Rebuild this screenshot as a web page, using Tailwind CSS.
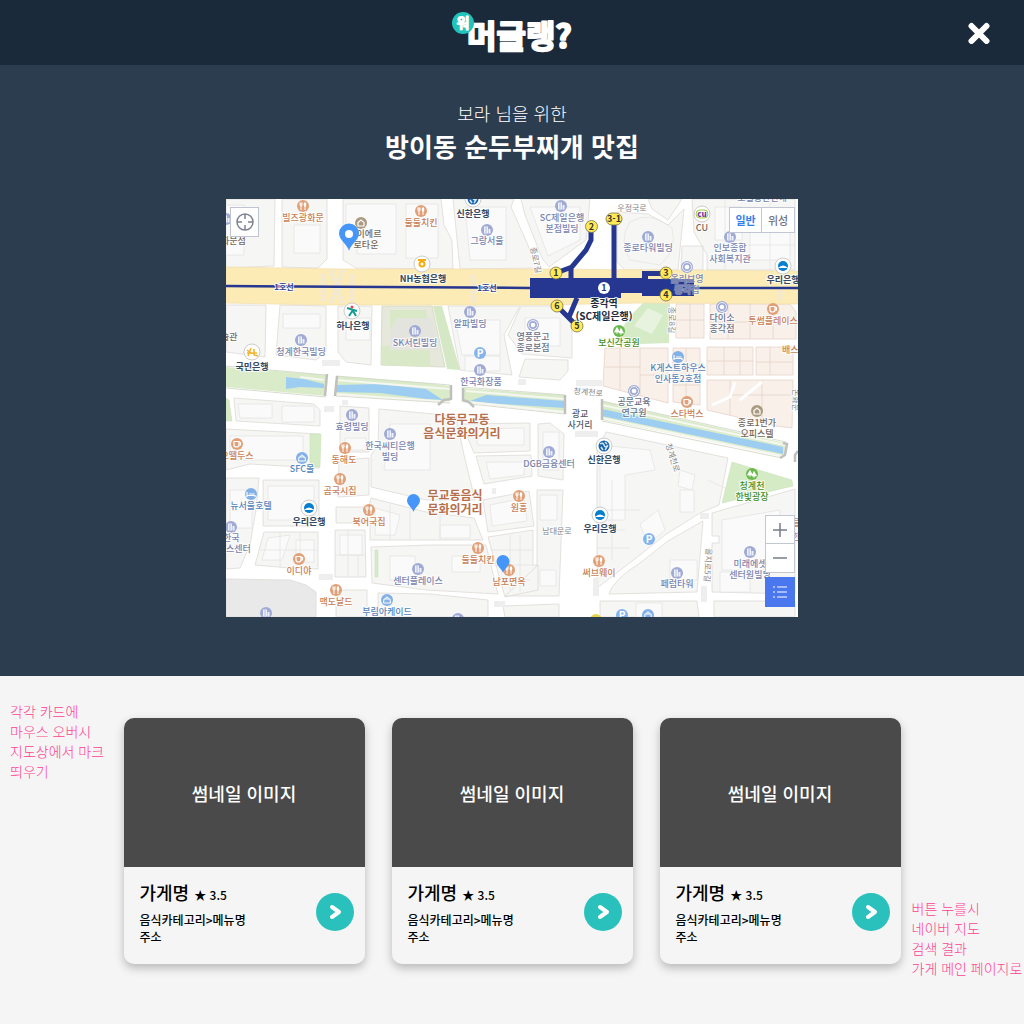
<!DOCTYPE html>
<html lang="ko">
<head>
<meta charset="utf-8">
<meta name="viewport" content="width=device-width, initial-scale=1">
<title>머글랭?</title>
<script src="https://cdn.jsdelivr.net/npm/@tailwindcss/browser@4"></script>
</head>
<body class="min-h-screen flex flex-col bg-[#f5f5f5] font-['Noto_Sans_CJK_KR',sans-serif] text-black">

<header class="h-[65px] shrink-0 bg-[#1b2a3a] grid grid-cols-[1fr_auto_1fr] items-center">
  <h1 class="col-start-2">
    <svg class="block w-[124px] h-[56px]" viewBox="450 4 124 56" role="img" aria-label="뭐 머글랭?">
      <g font-family="'Noto Sans CJK KR',sans-serif" font-weight="700" fill="#fff" stroke="#fff" stroke-linejoin="round">
        <text x="467" y="47" font-size="32" stroke-width="2">머글랭?</text>
        <circle cx="463" cy="22" r="11" fill="#1fc4bd" stroke="none"/>
        <text x="463" y="27" font-size="14" stroke-width="1" text-anchor="middle">워</text>
      </g>
    </svg>
  </h1>
  <button type="button" aria-label="닫기" class="justify-self-end mr-8 p-0.5">
    <svg class="block w-[22px] h-[22px]" viewBox="0 0 22 22" stroke="#fff" stroke-width="6" stroke-linecap="round"><path d="M3.500 4 18.500 19M18.500 4 3.500 19"/></svg>
  </button>
</header>

<main class="flex-1 flex flex-col">
<section class="bg-[#2d3d50] flex flex-col items-center pt-[35px] pb-[59px]">
  <p class="text-[18px] leading-[26px] font-light text-white">보라 님을 위한</p>
  <h2 class="text-[26px] leading-10 font-bold text-white">방이동 순두부찌개 맛집</h2>

  <div class="relative mt-[33px] w-[572px] max-w-full">
  <svg class="block w-full" viewBox="226 199 572 418" role="img" aria-label="지도">
    <defs>
      <g id="bld"><circle r="6" fill="#a0abd5"/><path d="M-3 3.5V-3.5H1V3.5ZM1.5 3.500V-1H3.500V3.500Z" fill="#eef0fa"/><path d="M-1.800-2H0M-1.800 0H0M-1.800 2H0" stroke="#a0abd5" stroke-width=".8"/></g>
      <g id="food"><circle r="6" fill="#e0a078"/><path d="M-3-3.500V-1Q-3 0-2 0T-1-1V-3.500M-2-3.500V4M2 4V0" stroke="#fff" fill="none"/><ellipse cx="2" cy="-1.500" rx="1.300" ry="2.200" fill="#fff"/></g>
      <g id="cafe"><circle r="6" fill="#e0a078"/><path d="M-3-2.500H2V1Q2 3-.500 3T-3 1ZM2-1.500H3.500V1H2" stroke="#fff" fill="none" stroke-width="1.200"/></g>
      <g id="ring"><circle r="6" fill="#a0abd5"/><circle r="4.500" fill="none" stroke="#fff" stroke-width=".8"/><circle r="2.300" fill="#fff"/></g>
      <g id="hotel"><circle r="6" fill="#83b0e6"/><path d="M-4-2V3M-4 1.500H4V3M-2 0H3.500" stroke="#fff" fill="none" stroke-width="1.200"/></g>
      <g id="shop"><circle r="6" fill="#83b0e6"/><path d="M-3-1H3L3.500 3H-3.500ZM-1.500-1Q-1.500-3 0-3T1.500-1" stroke="#fff" fill="none"/></g>
      <g id="home"><circle r="6" fill="#aa9b80"/><path d="M-3 3V-.500L0-3 3-.500V3Z" fill="none" stroke="#fff" stroke-width="1.200"/></g>
      <g id="park"><circle r="6" fill="#6cb84f"/><path d="M-2-3.500-4.500 1H.500ZM2-2.500 0 2H4.500ZM-2 0V3M2 1V4" fill="#fff" stroke="#fff" stroke-width=".8"/></g>
      <g id="p"><circle r="6" fill="#83b5ec"/><text y="3.500" font-size="10" font-weight="700" fill="#fff" text-anchor="middle">P</text></g>
      <g id="bank"><circle r="8" fill="#fff" stroke="#ccc"/></g>
      <g id="woori"><use href="#bank"/><circle r="5" fill="#087fce"/><path d="M-5 2Q0-3 5 2Z" fill="#fff"/><path d="M-4 3Q0 6 4 3Z" fill="#087fce"/></g>
      <g id="shinhan"><use href="#bank"/><circle r="5.500" fill="#1763ae"/><path d="M-4-2Q-1-4 0-1T3 0 1 4M1-4 3-2M-3 1-1 4" stroke="#cfe6ee" stroke-width="1.500" fill="none"/></g>
      <g id="pin"><path d="M0 9C-1 5-6.500 2-6.500-2.500A6.500 6.500 0 0 1 6.500-2.500C6.500 2 1 5 0 9Z" fill="#4596f8"/></g>
    </defs>

    <rect x="226" y="199" width="572" height="418" fill="#fff"/>
    <!-- city blocks -->
    <g fill="#f6f6f5" stroke="#dedbd6" stroke-width=".8">
      <path d="M226 199H275L274 266 226 268ZM282 199H327V259L318 268 282 267ZM343 199H441L444 225 452 240 453 269 356 268 343 260ZM453 199H514L511 207 530 250 540 268 460 269ZM521 199H590L586 240 549 267 542 258 525 215ZM617 212 648 214 668 225 684 209 678 270H625L617 262ZM648 199H682L668 220 652 209ZM692 199H795V270H707V255L694 232ZM682 246 703 246 703 270H681Z"/>
      <path d="M226 305H266L265 357 226 352ZM280 305 326 306V352L316 360 276 355ZM338 306H372L371 365 346 362 338 352ZM448 306H520L504 335 512 375 460 370ZM521 306H556L572 325V358L522 354 508 335ZM525 359 568 360V371L560 380 519 377Z"/>
      <path d="M234 398 314 404 320 410V426L236 421ZM226 429 320 434 319 468 250 464 226 470ZM340 406 369 408V452H340ZM379 409 456 416 464 455 475 500 426 500 371 487V455L378 445ZM339 460 369 458V495L338 497ZM462 424 530 423V451L474 453ZM476 456 531 455 532 476 484 484ZM538 424 550 423 564 434 563 480 538 476Z"/>
      <path d="M263 480H319V526H263ZM226 478H259L256 510 250 545 240 568 226 569ZM264 532H318V569L290 568 255 565ZM335 530H365L366 577H335ZM336 507H369L371 498 426 512 474 518 483 540 370 540V523H336ZM371 547 430 545H486L498 594 426 590 372 583ZM488 537 533 530V565H538V590L505 597ZM483 500 529 491 534 526 488 532ZM537 490H563L559 596H505L537 566ZM336 590H367V617H336ZM378 593 430 594 488 600V617H378ZM503 606 559 604V617H505Z"/>
      <path d="M606 432 728 458 719 505 700 513 665 535 640 555 597 588V450ZM609 594Q613 580 640 563L668 541 703 521 697 592ZM712 513 795 489V594L712 592V543H719V536H712ZM600 601H697L699 617H600ZM714 601H795V617H714Z"/>
      <path d="M226 579 290 580 306 585 316 592V617H226Z" fill="#e9e9e9"/>
    </g>
    <g fill="#f9f0ea" stroke="#e6d3c8" stroke-width=".8">
      <path d="M676 304H704V338H676ZM710 304 790 304 796 312V339H710ZM605 348H668V403L603 386ZM673 348H700V405L673 402ZM707 347H753V375H707ZM756 347H793V375H756ZM707 380H793L792 428 776 426 707 410Z"/>
      <path d="M676 320H704M690 304V338M728 304V339M750 304V339M773 310V339M710 322H796M620 348V390M640 348V396M605 367H640M640 375H668M673 365H700M673 385H700M686 348V404M724 347V375M740 347V375M707 361H753M770 347V375M756 362H793M730 380V415M762 380V424M730 395H792" fill="none"/>
      <path d="M735 382 730 397 712 405M762 382 740 400" stroke="#fff" stroke-width="3" fill="none"/>
    </g>
    <!-- building outlines -->
    <g fill="#fafafa" stroke="#e6e5e3" stroke-width=".8">
      <path d="M294 225H320V253H294ZM226 205H244V255H226ZM346 204H396V254H357V230H346ZM406 204H438V258H406ZM465 207H506V260H470ZM530 207H580V240L548 256ZM283 314H320V328H283ZM346 318H370V340H346ZM455 320H500V355H462ZM465 356H500V371H465ZM525 318H560V346H525ZM238 404H272V418H240ZM282 406H314V422H282ZM230 436H303V460H230ZM345 438H366V450H345ZM390 424H430V470H384ZM474 429 524 428V445H478ZM486 462H524V475L490 479ZM543 432H559V470H543ZM268 486H314V520H268ZM230 490H252V528H230ZM268 538 290 535 282 560H262ZM296 540H314V562H296ZM340 535H362V555H340ZM390 556H415V580H390ZM452 556H480V572H452ZM540 495H557V520H540ZM540 570H556V586H540ZM490 505 524 498 527 521 492 526ZM600 445 650 450 655 470 625 475V520H600ZM680 490H694V512H680ZM640 524 658 510 665 530 648 545ZM670 560H697V580H670ZM722 520 780 510V570H722ZM720 572H750V592H720ZM636 603H662V617H636ZM715 207H742V240H715ZM750 210H790V260H750ZM680 470 695 475 692 490 678 486ZM375 508 400 515 395 535H375ZM440 525H470V538H440Z"/>
      <path d="M630 222Q650 210 672 228 678 250 660 265L630 260Q618 240 630 222Z" fill="none"/>
      <path d="M260 550H318M280 532V568M300 532V568M335 555H366M348 530V577M358 555V577M490 550H532M494 565H533M510 535V590M520 535V592M498 580H530M597 510H640M597 530H625M612 480V560M597 548H630M390 505V540M410 510V540M440 500V540M708 480 750 500M745 245H795M770 199V270M725 199V270" fill="none"/>
    </g>
    <!-- green areas -->
    <path d="M382 306H432L445 367 381 365Z" fill="#e5e8da" stroke="#d8dcc9"/>
    <path d="M382 346H430V367L381 365ZM390 310H426L428 322 390 340Z" fill="#d9e9c8"/>
    <path d="M397 318H433L438 350H390V330Z" fill="#e4e4df"/>
    <path d="M433 306H442L460 370 447 369Z" fill="#d5e8c5"/>
    <path d="M643 303H670L669 343 612 345 630 316Z" fill="#d5ebc6"/>
    <path d="M648 308 663 315 652 334 634 326Z" fill="#e7f3de"/>
    <path d="M310 434H321L320 467H310ZM226 398 229 400 232 421H226ZM375 550H378V577H375ZM732 462 792 480 793 486 722 503Z" fill="#d5ebc6" stroke="#c9dfba" stroke-width=".5"/>
    <!-- stream -->
    <path d="M226 367 326 375V396L226 387ZM336 376 426 383 450 386V402L426 401 336 395ZM462 388 565 395V413L462 402ZM602 401 785 443V456L602 420Z" fill="#daebca"/>
    <path d="M286 377 304 379 324 384V388L300 387 286 389ZM336 385 380 384 426 389 443 400 426 399 380 393 336 392ZM470 401 486 395 565 401V408L500 404ZM602 409 783 447V454L602 416Z" fill="#9dcef1"/>
    <path d="M300 377 324 380M336 380 450 389M336 394 450 402M466 391 565 399M468 402 565 412M602 405 785 445M602 418 782 456" stroke="#f7f7f1" stroke-width="2" fill="none"/>
    <path d="M336 376 450 385M336 396 450 403M462 387 565 395M470 404 565 414M602 401 786 442M602 421 782 458M226 366 326 375M226 388 326 397" stroke="#cfd2c3" stroke-width=".8" fill="none"/>
    <path d="M327 374 325 396M337 376 335 396M451 385V399L444 400 438 405M463 388V400L469 402 474 407M565 395V414M602 399V420M783 443 787 444 785 455 780 458M798 451 795 455V462" stroke="#bfbfbd" stroke-width="2.500" fill="none"/>
    <!-- main road and subway -->
    <path d="M226 267 340 269 545 269 798 271V304L640 303 545 305 320 305 226 303Z" fill="#fcebb5" stroke="#f0deb0" stroke-width=".7"/>
    <path d="M323 274V302M331 270 343 304M343 270 331 304M352 274V302M473 275V303M780 290V300" stroke="#eee9e2" stroke-width="5" stroke-dasharray="3 1" opacity=".7"/>
    <path d="M322 363H340M324 409H334M345 400V405M576 383H602M575 434H598M319 577H333M596 578V596M494 604H505M700 516H709M704 586V602M492 491H496M518 382H526" stroke="#eee" stroke-width="6"/>
    <path d="M226 286 530 288M694 288H798" stroke="#253790" stroke-width="2.500"/>
    <path d="M530 278H642V271H668V276H648V279H694V296H642V293H621V298H530Z" fill="#253790"/>
    <path d="M591 228V240L586 250 571 268V280M556 273 572 267M614 220V280M577 298 569 317M558 307 578 327" fill="none" stroke="#253790" stroke-width="5"/>
    <g fill="#ffe957" stroke="#777344" stroke-width=".8"><circle cx="591.500" cy="226.500" r="6"/><circle cx="556" cy="273" r="6"/><circle cx="557" cy="306" r="6"/><circle cx="577" cy="326" r="6"/><circle cx="666" cy="273" r="6"/><circle cx="666" cy="295" r="6"/><rect x="606" y="213" width="16" height="12" rx="6"/></g>
    <circle cx="604" cy="288" r="6" fill="#fff"/>

    <!-- place icons -->
    <g font-family="'Noto Sans CJK KR',sans-serif">
    <use href="#food" x="303" y="206"/><use href="#food" x="421" y="211"/><use href="#food" x="345" y="448"/><use href="#food" x="340" y="479"/><use href="#food" x="369" y="510"/><use href="#food" x="336" y="590"/><use href="#food" x="519" y="496"/><use href="#food" x="478" y="548"/><use href="#food" x="509" y="570"/><use href="#food" x="599" y="561"/>
    <use href="#cafe" x="237" y="444"/><use href="#cafe" x="299" y="559"/><use href="#cafe" x="773" y="309"/><use href="#cafe" x="687" y="402"/>
    <use href="#bld" x="561" y="206"/><use href="#bld" x="487" y="230"/><use href="#bld" x="648" y="237"/><use href="#bld" x="730" y="237"/><use href="#bld" x="301" y="340"/><use href="#bld" x="415" y="331"/><use href="#bld" x="470" y="312"/><use href="#bld" x="480" y="370"/><use href="#bld" x="352" y="415"/><use href="#bld" x="390" y="434"/><use href="#bld" x="549" y="452"/><use href="#bld" x="231" y="527"/><use href="#bld" x="418" y="569"/><use href="#bld" x="266" y="613"/><use href="#bld" x="458" y="619"/><use href="#bld" x="677" y="573"/><use href="#bld" x="750" y="552"/><use href="#bld" x="226" y="219"/>
    <use href="#ring" x="687" y="267"/><use href="#ring" x="722" y="307"/><use href="#ring" x="533" y="325"/><use href="#ring" x="634" y="391"/>
    <use href="#hotel" x="678" y="357"/><use href="#hotel" x="251" y="494"/><use href="#shop" x="302" y="458"/><use href="#shop" x="387" y="600"/><use href="#shop" x="648" y="615"/>
    <use href="#home" x="361" y="223"/><use href="#home" x="757" y="411"/><use href="#park" x="619" y="331"/><use href="#park" x="752" y="474"/>
    <use href="#p" x="480" y="353"/><use href="#p" x="649" y="539"/><use href="#p" x="622" y="615"/>
    <use href="#woori" x="783" y="266"/><use href="#woori" x="309" y="508"/><use href="#woori" x="600" y="515"/><use href="#shinhan" x="473" y="199"/><use href="#shinhan" x="604" y="446"/>
    <use href="#bank" x="422" y="264"/><circle cx="422" cy="264" r="2.500" fill="none" stroke="#f5ad12" stroke-width="2"/><path d="M418 260H426" stroke="#f5ad12" stroke-width="2"/>
    <use href="#bank" x="352" y="311"/><path d="M347 308 357 311M353 310 349 316M353 311 356 316" stroke="#149c95" stroke-width="2"/><circle cx="352" cy="307" r="1.500" fill="#e6484b"/>
    <use href="#bank" x="252" y="352"/><path d="M247 350 252 354M251 348 248 356M247 353H257M254 349V355L258 356" stroke="#f5b52a" stroke-width="1.500" fill="none"/>
    <use href="#bank" x="702" y="214"/><rect x="696" y="210" width="12" height="8" rx="4" fill="#fff" stroke="#9ccb3b"/><text x="702" y="217" font-size="8" font-weight="900" fill="#75399a" text-anchor="middle">cu</text>
    <circle cx="596" cy="620" r="6" fill="#e6d54b"/>
    </g>

    <!-- labels -->
    <g font-family="'Noto Sans CJK KR',sans-serif" font-size="9" font-weight="500" text-anchor="middle" stroke="#fff" stroke-width="2" stroke-opacity=".8" stroke-linejoin="round" paint-order="stroke">
      <g fill="#c87f56">
        <text x="303" y="221">빌즈광화문</text><text x="421" y="226">둘둘치킨</text><text x="344" y="463">동해도</text><text x="340" y="494">곰국시집</text><text x="369" y="525">북어국집</text><text x="336" y="605">맥도날드</text><text x="519" y="511">원흥</text><text x="478" y="563">둘둘치킨</text><text x="509" y="585">남포면옥</text><text x="599" y="576">써브웨이</text><text x="237" y="459">오뗄두스</text><text x="299" y="574">이디야</text><text x="773" y="324">투썸플레이스</text><text x="687" y="417">스타벅스</text><text x="782" y="353" text-anchor="start">배스</text><text x="792" y="526" text-anchor="start">을</text><text x="792" y="540" text-anchor="start">한</text>
      </g>
      <g fill="#7984ae">
        <text x="562" y="221">SC제일은행</text><text x="562" y="232">본점빌딩</text><text x="487" y="244">그랑서울</text><text x="648" y="251">종로타워빌딩</text><text x="730" y="251">인보종합</text><text x="730" y="262">사회복지관</text><text x="301" y="355">청계한국빌딩</text><text x="415" y="346">SK서린빌딩</text><text x="470" y="327">알파빌딩</text><text x="481" y="385">한국화장품</text><text x="352" y="430">효령빌딩</text><text x="390" y="449">한국씨티은행</text><text x="390" y="460">빌딩</text><text x="549" y="467">DGB금융센터</text><text x="418" y="584">센터플레이스</text><text x="677" y="587">페럼타워</text><text x="750" y="567">미래에셋</text><text x="750" y="578">센터원빌딩</text><text x="223" y="541" text-anchor="start">한국</text><text x="226" y="552" text-anchor="start">스센터</text><text x="762" y="201">오설송안선애</text>
      </g>
      <g fill="#687188">
        <text x="722" y="321">다이소</text><text x="722" y="332">종각점</text><text x="533" y="340">영풍문고</text><text x="533" y="351">종로본점</text><text x="634" y="405">공문교육</text><text x="634" y="416">연구원</text>
      </g>
      <g fill="#7e88ae"><text x="687" y="282" stroke-opacity=".4">올리브영</text><text x="687" y="293" stroke-opacity=".4">종각점</text></g>
      <g fill="#5685bb">
        <text x="678" y="371">K게스트하우스</text><text x="678" y="382">인사동2호점</text><text x="251" y="509">뉴서울호텔</text><text x="302" y="472">SFC몰</text><text x="387" y="615">부림아케이드</text>
      </g>
      <g fill="#756858">
        <text x="369" y="237">이에르</text><text x="366" y="248">로타운</text><text x="757" y="426">종로1번가</text><text x="757" y="437">오피스텔</text><text x="702" y="231">CU</text><text x="221" y="244" text-anchor="start">화문점</text><text x="221" y="340" text-anchor="start">술관</text>
      </g>
      <g fill="#438f2a"><text x="619" y="346">보신각공원</text><text x="752" y="489">청계천</text><text x="752" y="500">한빛광장</text></g>
      <g fill="#344963" font-weight="700">
        <text x="473" y="217">신한은행</text><text x="423" y="282">NH농협은행</text><text x="353" y="329">하나은행</text><text x="252" y="370">국민은행</text><text x="309" y="525">우리은행</text><text x="600" y="532">우리은행</text><text x="604" y="463">신한은행</text><text x="783" y="283">우리은행</text>
      </g>
      <g fill="#555b68" font-weight="500"><text x="580" y="417">광교</text><text x="580" y="428">사거리</text></g>
      <g fill="#86868a" font-weight="400" font-size="8">
        <text x="632" y="211">우정국로</text><text x="588" y="395" transform="rotate(5 588 395)">청계천로</text><text x="557" y="534">남대문로</text>
        <text x="536" y="263" transform="rotate(78 536 260)">종로7길</text><text x="671" y="322" transform="rotate(90 671 320)">종로8길</text><text x="672" y="460" transform="rotate(72 672 458)">청계천로</text><text x="707" y="567" transform="rotate(93 707 565)">을지로5길</text><text x="795" y="402" transform="rotate(90 795 400)">돈화문</text>
      </g>
      <g fill="#2d3f91" font-size="8" font-weight="700"><text x="284" y="290">1호선</text><text x="487" y="291">1호선</text></g>
      <g fill="#b66f4c" font-size="12" font-weight="700"><text x="462" y="424">다동무교동</text><text x="462" y="438">음식문화의거리</text><text x="455" y="500">무교동음식</text><text x="455" y="514">문화의거리</text></g>
      <g fill="#222b3d" font-size="10" font-weight="700"><text x="604" y="307">종각역</text><text x="604" y="320">(SC제일은행)</text></g>
    </g>

    <g font-family="'Noto Sans CJK KR',sans-serif" font-size="9" font-weight="700" text-anchor="middle" fill="#333">
      <text x="591.500" y="230">2</text><text x="556" y="276">1</text><text x="557" y="309">6</text><text x="577" y="329">5</text><text x="666" y="276">3</text><text x="666" y="298">4</text><text x="614" y="222">3-1</text><text x="604" y="291" fill="#253790">1</text>
    </g>

    <!-- restaurant pins -->
    <use href="#pin" x="413.500" y="503"/><use href="#pin" x="503" y="564"/>
    <g transform="translate(349 237)"><path d="M0 14C-1 8-10 3-10-3.500A10 10 0 0 1 10-3.500C10 3 1 8 0 14Z" fill="#4596f8"/><circle cy="-3" r="4" fill="#fff"/></g>
  </svg>

  <button type="button" aria-label="현재 위치" class="absolute left-1 top-2 w-[29px] h-[30px] bg-white border border-[#bfc3d2] flex items-center justify-center">
    <svg class="w-5 h-5" viewBox="0 0 20 20" fill="none" stroke="#7d8290" stroke-width="1.500"><circle cx="10" cy="10" r="8"/><path d="M10 2V7M10 13V18M2 10H7M13 10H18"/></svg>
  </button>
  <div class="absolute right-[3px] top-2 w-[66px] h-[26px] bg-white border border-[#c3c7d3] grid grid-cols-2 divide-x divide-[#c3c7d3] text-[11px] leading-none">
    <button type="button" class="font-bold text-[#327fe8]">일반</button>
    <button type="button" class="font-medium text-[#707482]">위성</button>
  </div>
  <div class="absolute right-[3px] bottom-[10px] w-[30px] flex flex-col gap-1">
    <div class="bg-white border border-[#c3c7d3] flex flex-col divide-y divide-[#c3c7d3]">
      <button type="button" aria-label="확대" class="h-7 flex items-center justify-center"><svg class="w-4 h-4" viewBox="0 0 16 16" stroke="#777b8c" stroke-width="1.500"><path d="M1 8H15M8 1V15"/></svg></button>
      <button type="button" aria-label="축소" class="h-7 flex items-center justify-center"><svg class="w-4 h-4" viewBox="0 0 16 16" stroke="#777b8c" stroke-width="1.500"><path d="M1 8H15"/></svg></button>
    </div>
    <button type="button" aria-label="목록" class="h-[30px] bg-[#4a76ee] flex items-center justify-center"><svg class="w-4 h-4" viewBox="0 0 16 16" stroke="#fff" stroke-width="1.200"><path d="M5 3H15M5 8H15M5 13H15M1 3H3M1 8H3M1 13H3"/></svg></button>
  </div>
  </div>
</section>

<section class="grid grid-cols-[1fr_777px_1fr] pt-[25px] pb-[46px] text-[14px] leading-5">
  <aside class="pl-[10px] font-light text-[#ff4291] whitespace-nowrap">각각 카드에<br>마우스 오버시<br>지도상에서 마크<br>띄우기</aside>

  <div class="grid grid-cols-3 gap-[27px] mt-[17px] mb-[14px] text-black">
    <article class="rounded-[10px] overflow-hidden bg-[#f5f5f5] shadow-[0_4px_10px_rgba(0,0,0,0.25)]">
      <div class="h-[149px] bg-[#4a4a4a] flex items-center justify-center text-white text-[18px] font-medium">썸네일 이미지</div>
      <div class="h-[97px] pl-4 pr-[11px] pb-[7px] flex items-center justify-between">
        <div class="font-medium text-[12px] leading-[17px]">
          <h3 class="text-[18px] leading-[26px] mb-[3px]">가게명 <span class="text-[12px]">★ 3.5</span></h3>
          <p>음식카테고리&gt;메뉴명</p>
          <p>주소</p>
        </div>
        <button type="button" aria-label="가게 페이지로 이동" class="w-[38px] h-[38px] rounded-full bg-[#2ac1bc] flex items-center justify-center"><svg class="w-4 h-4" viewBox="0 0 16 16" fill="none" stroke="#fff" stroke-width="4" stroke-linecap="round" stroke-linejoin="round"><path d="M5 3 12 8 5 13"/></svg></button>
      </div>
    </article>
    <article class="rounded-[10px] overflow-hidden bg-[#f5f5f5] shadow-[0_4px_10px_rgba(0,0,0,0.25)]">
      <div class="h-[149px] bg-[#4a4a4a] flex items-center justify-center text-white text-[18px] font-medium">썸네일 이미지</div>
      <div class="h-[97px] pl-4 pr-[11px] pb-[7px] flex items-center justify-between">
        <div class="font-medium text-[12px] leading-[17px]">
          <h3 class="text-[18px] leading-[26px] mb-[3px]">가게명 <span class="text-[12px]">★ 3.5</span></h3>
          <p>음식카테고리&gt;메뉴명</p>
          <p>주소</p>
        </div>
        <button type="button" aria-label="가게 페이지로 이동" class="w-[38px] h-[38px] rounded-full bg-[#2ac1bc] flex items-center justify-center"><svg class="w-4 h-4" viewBox="0 0 16 16" fill="none" stroke="#fff" stroke-width="4" stroke-linecap="round" stroke-linejoin="round"><path d="M5 3 12 8 5 13"/></svg></button>
      </div>
    </article>
    <article class="rounded-[10px] overflow-hidden bg-[#f5f5f5] shadow-[0_4px_10px_rgba(0,0,0,0.25)]">
      <div class="h-[149px] bg-[#4a4a4a] flex items-center justify-center text-white text-[18px] font-medium">썸네일 이미지</div>
      <div class="h-[97px] pl-4 pr-[11px] pb-[7px] flex items-center justify-between">
        <div class="font-medium text-[12px] leading-[17px]">
          <h3 class="text-[18px] leading-[26px] mb-[3px]">가게명 <span class="text-[12px]">★ 3.5</span></h3>
          <p>음식카테고리&gt;메뉴명</p>
          <p>주소</p>
        </div>
        <button type="button" aria-label="가게 페이지로 이동" class="w-[38px] h-[38px] rounded-full bg-[#2ac1bc] flex items-center justify-center"><svg class="w-4 h-4" viewBox="0 0 16 16" fill="none" stroke="#fff" stroke-width="4" stroke-linecap="round" stroke-linejoin="round"><path d="M5 3 12 8 5 13"/></svg></button>
      </div>
    </article>
  </div>

  <aside class="self-end pl-[11px] font-light text-[#ff4291] whitespace-nowrap">버튼 누를시<br>네이버 지도<br>검색 결과<br>가게 메인 페이지로</aside>
</section>
</main>
</body>
</html>
